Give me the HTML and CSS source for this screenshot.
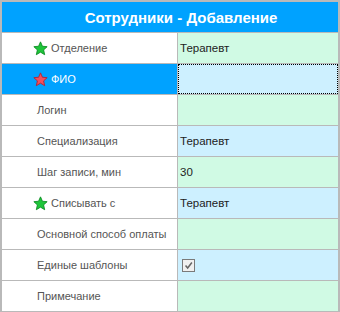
FILE: index.html
```html
<!DOCTYPE html>
<html lang="ru">
<head>
<meta charset="UTF-8" />
<title>Сотрудники - Добавление</title>
<link rel="stylesheet" href="styles.css">
</head>
<body>
<div class="form-box">
  <div class="form-title">Сотрудники - Добавление</div>

  <div class="row">
    <div class="label"><svg class="star" viewBox="0 0 14 14"><path class="star-green" d="M7 0.8 L8.8 4.9 L13.2 5.3 L9.9 8.3 L10.9 12.8 L7 10.4 L3.1 12.8 L4.1 8.3 L0.8 5.3 L5.2 4.9 Z"/></svg>Отделение</div>
    <div class="value green">Терапевт</div>
  </div>
  <div class="row selected">
    <div class="label"><svg class="star" viewBox="0 0 14 14"><path class="star-red" d="M7 0.8 L8.8 4.9 L13.2 5.3 L9.9 8.3 L10.9 12.8 L7 10.4 L3.1 12.8 L4.1 8.3 L0.8 5.3 L5.2 4.9 Z"/></svg>ФИО</div>
    <div class="value blue focused"></div>
  </div>
  <div class="row">
    <div class="label plain">Логин</div>
    <div class="value green"></div>
  </div>
  <div class="row">
    <div class="label plain">Специализация</div>
    <div class="value blue">Терапевт</div>
  </div>
  <div class="row">
    <div class="label plain">Шаг записи, мин</div>
    <div class="value green">30</div>
  </div>
  <div class="row">
    <div class="label"><svg class="star" viewBox="0 0 14 14"><path class="star-green" d="M7 0.8 L8.8 4.9 L13.2 5.3 L9.9 8.3 L10.9 12.8 L7 10.4 L3.1 12.8 L4.1 8.3 L0.8 5.3 L5.2 4.9 Z"/></svg>Списывать с</div>
    <div class="value blue">Терапевт</div>
  </div>
  <div class="row">
    <div class="label plain">Основной способ оплаты</div>
    <div class="value green"></div>
  </div>
  <div class="row">
    <div class="label plain">Единые шаблоны</div>
    <div class="value blue">
      <span class="check"><svg viewBox="0 0 13 13"><path d="M3 6.5 L5.5 9.5 L10.5 3" /></svg></span>
    </div>
  </div>
  <div class="row last">
    <div class="label plain">Примечание</div>
    <div class="value green"></div>
  </div>
</div>
</body>
</html>
```

FILE: styles.css
```css
html, body {
  margin: 0;
  padding: 0;
}
body {
  width: 340px;
  height: 312px;
  background: #b9b9b9;
  font-family: 'Liberation Sans', Tahoma, Arial, sans-serif;
  font-size: 11px;
}
.form-box {
  margin: 2px;
  background: #fff;
  height: 309px;
  overflow: hidden;
}
.form-title {
  height: 30px;
  line-height: 31px;
  padding-left: 22px;
  background: #00a2ff;
  color: #fff;
  font-weight: bold;
  font-size: 15px;
  text-align: center;
  border-bottom: 1px solid #b9b9b9;
}
.row {
  display: grid;
  grid-template-columns: 176px 1fr;
  height: 30px;
  border-bottom: 1px solid #b9b9b9;
}
.row.last {
  border-bottom: none;
}
.label {
  display: flex;
  align-items: center;
  padding-left: 31px;
  color: #555;
  background: #fff;
  white-space: nowrap;
  border-right: 1px solid #b9b9b9;
}
.label.plain {
  padding-left: 35px;
}
.selected .label {
  background: #00a2ff;
  color: #fff;
}
.star {
  width: 15px;
  height: 15px;
  margin-right: 3px;
}
.star-green {
  fill: #1ec53a;
  stroke: #0b8a22;
  stroke-width: 0.8;
}
.star-red {
  fill: #f0505e;
  stroke: #b81d2c;
  stroke-width: 0.8;
}
.value {
  display: flex;
  align-items: center;
  padding-left: 2px;
  color: #222;
  font-size: 11.5px;
}
.value.green {
  background: #d0fae4;
}
.value.blue {
  background: #cdf0ff;
}
.value.focused {
  outline: 1px dotted #000;
  outline-offset: -1px;
}
.check {
  width: 11px;
  height: 11px;
  margin-left: 2px;
  border: 1px solid #7a7a7a;
  background: #f0f0f0;
  display: flex;
}
.check svg {
  width: 11px;
  height: 11px;
}
.check path {
  fill: none;
  stroke: #666;
  stroke-width: 1.8;
}
```
